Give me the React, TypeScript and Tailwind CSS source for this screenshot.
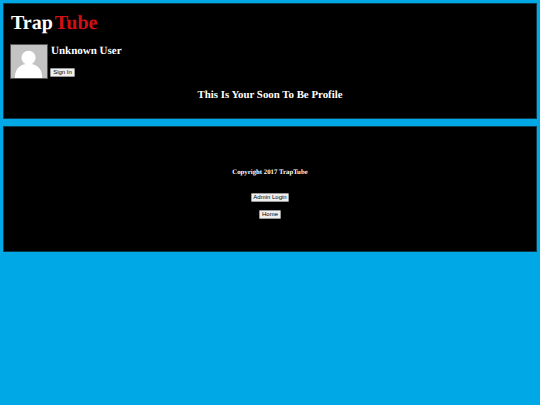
export default function App() {
  return (
    <div className="min-h-[405px] bg-[#00a9e6] px-[3px] pt-[3px] font-['Liberation_Serif',serif] text-white antialiased [text-rendering:geometricPrecision]">
      <div className="h-[116px] border border-[#0b3a4d] bg-black px-[6px] pt-[6px]">
        <h1 className="ml-[1px] h-[30px] text-[20px] leading-[26px] font-bold">
          Trap <span className="ml-[-3px] text-[#d40f14]">Tube</span>
        </h1>
        <div className="mt-[4px] flex">
          <div className="h-[35px] w-[38px] overflow-hidden border border-[#555] bg-[#c3c3c3]">
            <svg viewBox="0 0 38 35" className="h-full w-full">
              <circle cx="18.5" cy="13.5" r="7.5" fill="#fff" />
              <path d="M4 35C4 24 11 20 18.5 20S33 24 33 35Z" fill="#fff" />
            </svg>
          </div>
          <div className="ml-[2px] flex flex-col items-start">
            <div className="ml-[1px] text-[11px] leading-[14px] font-bold">Unknown User</div>
            <button className="mt-[10px] h-[9px] w-[25px] rounded-[1px] border border-[#999] bg-[#efefef] font-['Liberation_Sans',sans-serif] text-[6px] leading-[7px] text-black">
              Sign In
            </button>
          </div>
        </div>
        <h2 className="mt-[9px] text-center text-[10.85px] leading-[14px] font-bold">
          This Is Your Soon To Be Profile
        </h2>
      </div>
      <div className="mt-[7px] flex h-[126px] flex-col items-center border border-[#0b3a4d] bg-black pt-[41px]">
        <p className="text-[6.8px] leading-[10px] font-bold">Copyright 2017 TrapTube</p>
        <button className="mt-[15px] h-[9px] w-[38px] rounded-[1px] border border-[#999] bg-[#efefef] font-['Liberation_Sans',sans-serif] text-[6px] leading-[7px] text-black">
          Admin Login
        </button>
        <button className="mt-[8px] h-[9px] w-[22px] rounded-[1px] border border-[#999] bg-[#efefef] font-['Liberation_Sans',sans-serif] text-[6px] leading-[7px] text-black">
          Home
        </button>
      </div>
    </div>
  );
}
